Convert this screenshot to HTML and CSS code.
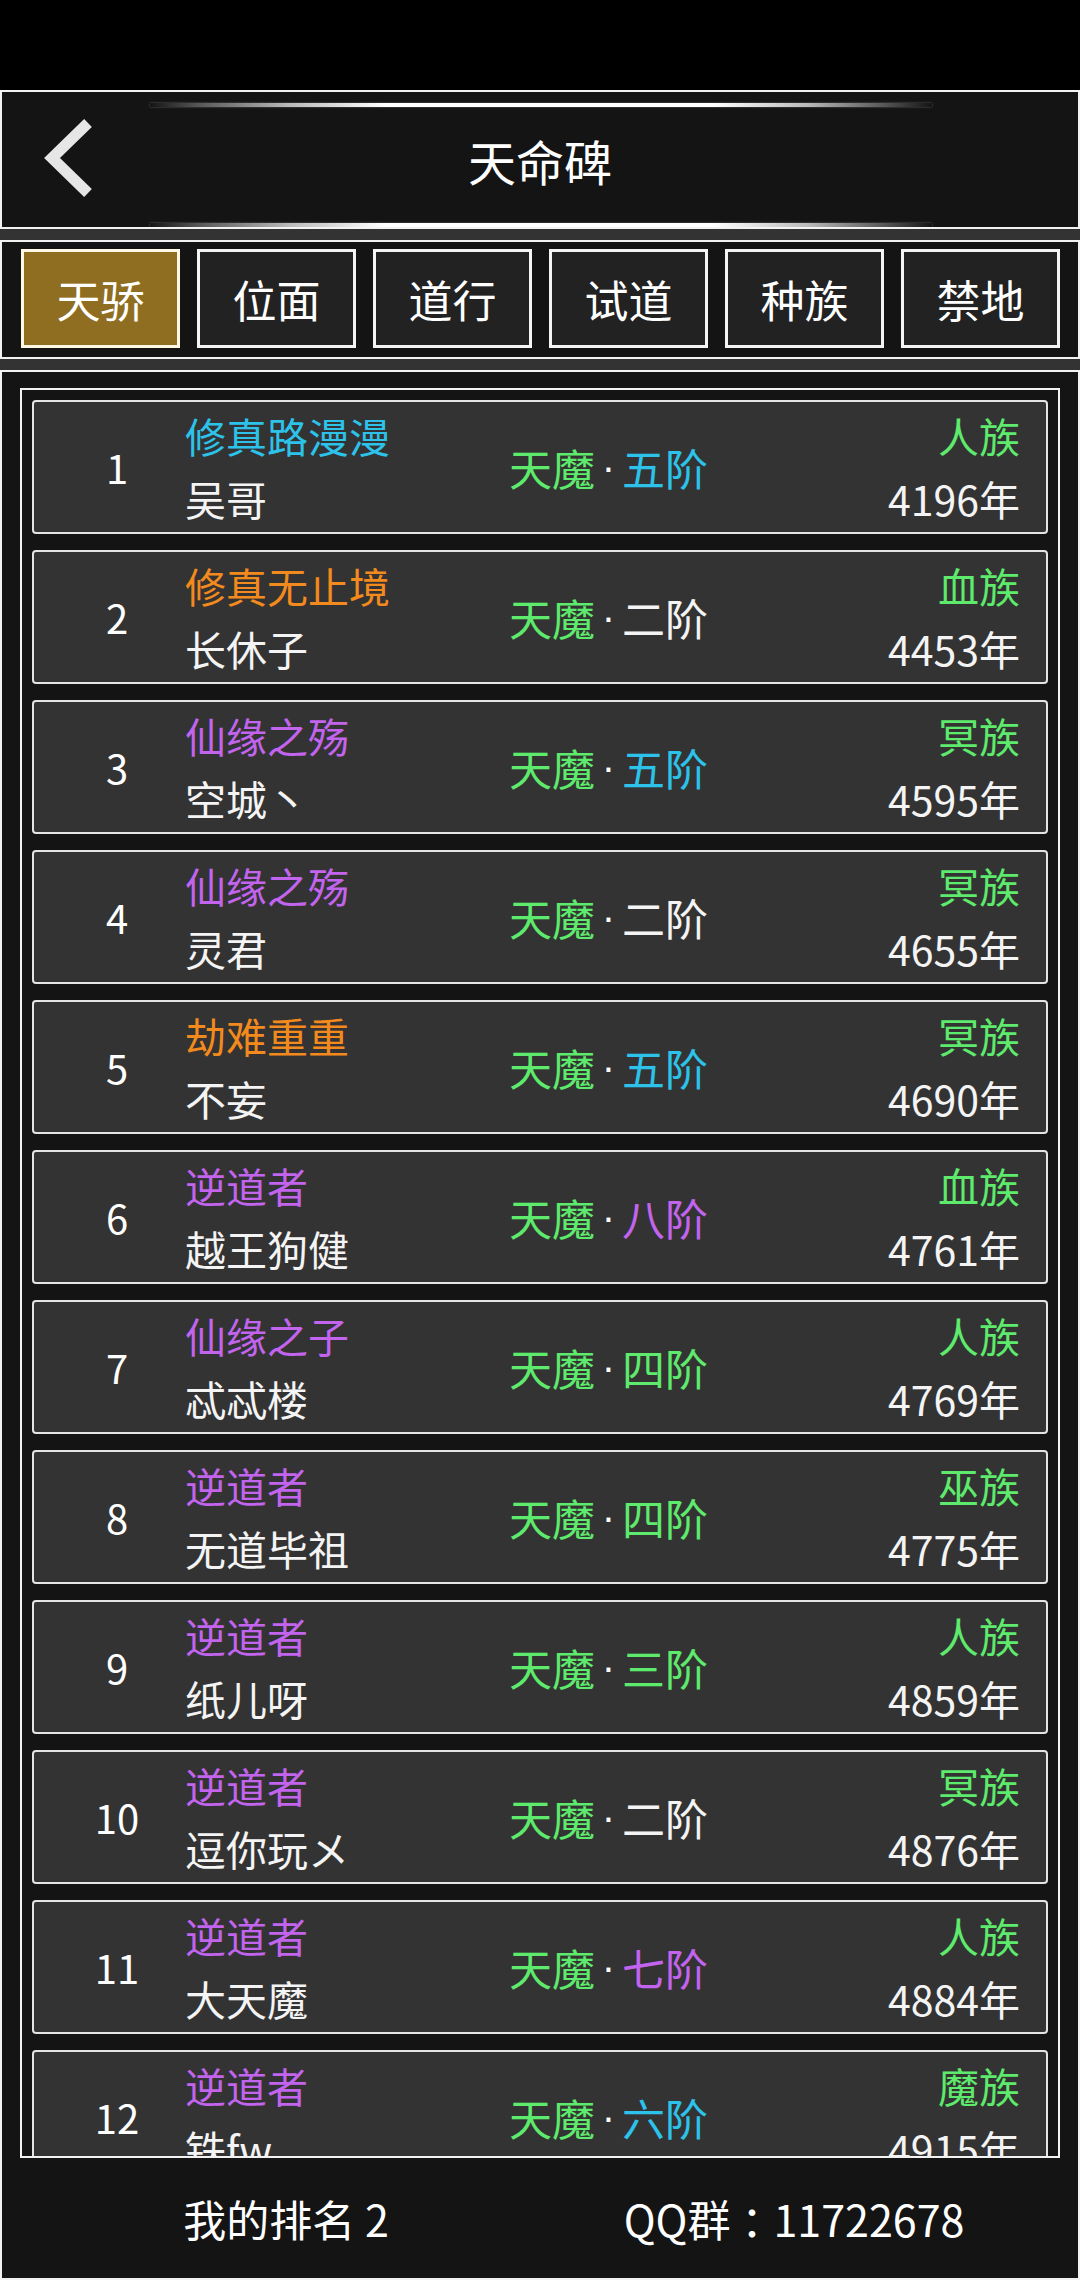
FILE: index.html
```html
<!DOCTYPE html>
<html lang="zh-CN">
<head>
<meta charset="utf-8">
<title>天命碑</title>
<link rel="stylesheet" href="styles.css">
</head>
<body>
<div class="status"></div>
<header class="header">
  <div class="gloss"></div>
  <div class="bar">
    <div class="back">
      <svg width="60" height="90" viewBox="0 0 60 90">
        <polyline points="46,8 10,43 46,78" fill="none" stroke="#e6e6e6" stroke-width="11" stroke-linejoin="miter" stroke-miterlimit="4"/>
      </svg>
    </div>
    <h1 class="title">天命碑</h1>
    <div></div>
  </div>
  <div class="gloss"></div>
</header>
<div class="strip"></div>
<nav class="tabs">
  <div class="tab active">天骄</div>
  <div class="tab">位面</div>
  <div class="tab">道行</div>
  <div class="tab">试道</div>
  <div class="tab">种族</div>
  <div class="tab">禁地</div>
</nav>
<div class="strip"></div>
<main class="panel">
  <div class="list">
    <div class="row"><div class="rank">1</div><div class="names"><span class="cyan">修真路漫漫</span><span>吴哥</span></div><div class="stage"><span class="green">天魔</span><span class="dot">·</span><span class="cyan">五阶</span></div><div class="meta"><span class="green">人族</span><span>4196年</span></div></div>
    <div class="row"><div class="rank">2</div><div class="names"><span class="orange">修真无止境</span><span>长休子</span></div><div class="stage"><span class="green">天魔</span><span class="dot">·</span><span>二阶</span></div><div class="meta"><span class="green">血族</span><span>4453年</span></div></div>
    <div class="row"><div class="rank">3</div><div class="names"><span class="purple">仙缘之殇</span><span>空城丶</span></div><div class="stage"><span class="green">天魔</span><span class="dot">·</span><span class="cyan">五阶</span></div><div class="meta"><span class="green">冥族</span><span>4595年</span></div></div>
    <div class="row"><div class="rank">4</div><div class="names"><span class="purple">仙缘之殇</span><span>灵君</span></div><div class="stage"><span class="green">天魔</span><span class="dot">·</span><span>二阶</span></div><div class="meta"><span class="green">冥族</span><span>4655年</span></div></div>
    <div class="row"><div class="rank">5</div><div class="names"><span class="orange">劫难重重</span><span>不妄</span></div><div class="stage"><span class="green">天魔</span><span class="dot">·</span><span class="cyan">五阶</span></div><div class="meta"><span class="green">冥族</span><span>4690年</span></div></div>
    <div class="row"><div class="rank">6</div><div class="names"><span class="purple">逆道者</span><span>越王狗健</span></div><div class="stage"><span class="green">天魔</span><span class="dot">·</span><span class="purple">八阶</span></div><div class="meta"><span class="green">血族</span><span>4761年</span></div></div>
    <div class="row"><div class="rank">7</div><div class="names"><span class="purple">仙缘之子</span><span>忒忒楼</span></div><div class="stage"><span class="green">天魔</span><span class="dot">·</span><span class="green">四阶</span></div><div class="meta"><span class="green">人族</span><span>4769年</span></div></div>
    <div class="row"><div class="rank">8</div><div class="names"><span class="purple">逆道者</span><span>无道毕祖</span></div><div class="stage"><span class="green">天魔</span><span class="dot">·</span><span class="green">四阶</span></div><div class="meta"><span class="green">巫族</span><span>4775年</span></div></div>
    <div class="row"><div class="rank">9</div><div class="names"><span class="purple">逆道者</span><span>纸儿呀</span></div><div class="stage"><span class="green">天魔</span><span class="dot">·</span><span class="green">三阶</span></div><div class="meta"><span class="green">人族</span><span>4859年</span></div></div>
    <div class="row"><div class="rank">10</div><div class="names"><span class="purple">逆道者</span><span>逗你玩メ</span></div><div class="stage"><span class="green">天魔</span><span class="dot">·</span><span>二阶</span></div><div class="meta"><span class="green">冥族</span><span>4876年</span></div></div>
    <div class="row"><div class="rank">11</div><div class="names"><span class="purple">逆道者</span><span>大天魔</span></div><div class="stage"><span class="green">天魔</span><span class="dot">·</span><span class="purple">七阶</span></div><div class="meta"><span class="green">人族</span><span>4884年</span></div></div>
    <div class="row"><div class="rank">12</div><div class="names"><span class="purple">逆道者</span><span>铁fw</span></div><div class="stage"><span class="green">天魔</span><span class="dot">·</span><span class="cyan">六阶</span></div><div class="meta"><span class="green">魔族</span><span>4915年</span></div></div>
  </div>
  <footer class="footer">
    <div>我的排名 2</div>
    <div>QQ群<span class="colon">：</span>11722678</div>
  </footer>
</main>
</body>
</html>
```
FILE: styles.css
```css
* { box-sizing: border-box; }
html, body {
  margin: 0;
  padding: 0;
  background: #000;
}
body {
  width: 1080px;
  height: 2280px;
  overflow: hidden;
  font-family: "Noto Sans CJK SC", "Noto Sans", sans-serif;
  color: #f4f4f4;
  display: flex;
  flex-direction: column;
}
.status { height: 90px; flex: none; }

.header {
  flex: none;
  height: 139px;
  background: #141414;
  border: 2px solid #f2f2f2;
  display: flex;
  flex-direction: column;
}
.gloss {
  margin: 11px 0 0 148px;
  width: 782px;
  height: 4px;
  background: linear-gradient(to right, rgba(255,255,255,0) 0%, #555 6%, #bbb 18%, #fff 30%, #fff 72%, #bbb 84%, #555 94%, rgba(255,255,255,0) 100%);
  box-shadow: 0 0 2px rgba(255,255,255,0.4);
}
.bar {
  height: 106px;
  display: grid;
  grid-template-columns: 200px 1fr 200px;
  align-items: center;
}
.back {
  padding-left: 40px;
  display: flex;
  align-items: center;
}
.back svg { display: block; }
.title {
  margin: 0;
  text-align: center;
  font-size: 48px;
  font-weight: 400;
  color: #fff;
}

.strip {
  flex: none;
  height: 11px;
  background: #333;
}

.tabs {
  flex: none;
  height: 119px;
  background: #141414;
  border: 2px solid #f2f2f2;
  padding: 7px 18px 0 19px;
  display: grid;
  grid-template-columns: repeat(6, 1fr);
  column-gap: 17px;
  align-content: start;
}
.tab {
  height: 99px;
  border: 3px solid #f4f4f4;
  background: #222;
  display: flex;
  align-items: center;
  justify-content: center;
  font-size: 44px;
  color: #fff;
}
.tab.active {
  background: #8f6d21;
  border-color: #fff8e4;
}

.panel {
  flex: 1;
  min-height: 0;
  background: #141414;
  border: 2px solid #f2f2f2;
  padding: 16px 18px 0 18px;
  display: flex;
  flex-direction: column;
}
.list {
  height: 1770px;
  flex: none;
  border: 2px solid #f2f2f2;
  padding: 10px 10px 0 10px;
  overflow: hidden;
  display: flex;
  flex-direction: column;
  gap: 16px;
}
.row {
  flex: none;
  height: 134px;
  background: #333;
  border: 2px solid #e4e4e4;
  border-radius: 4px;
  display: grid;
  grid-template-columns: 151px 324px 1fr auto;
  align-items: center;
  padding-right: 26px;
}
.rank {
  padding-left: 15px;
  text-align: center;
  font-size: 40px;
  color: #fff;
}
.names, .meta {
  display: flex;
  flex-direction: column;
  font-size: 41px;
  line-height: 63px;
}
.meta { align-items: flex-end; }
.stage {
  font-size: 43px;
  line-height: 60px;
  display: flex;
  align-items: center;
}
.dot {
  display: inline-block;
  width: 27px;
  text-align: center;
  font-family: "Liberation Sans", sans-serif;
  font-size: 40px;
  color: #fff;
}
.cyan { color: #2cc2ea; }
.orange { color: #f38a1d; }
.purple { color: #c264ee; }
.green { color: #5eea6c; }

.footer {
  flex: 1;
  display: grid;
  grid-template-columns: 1fr 1fr;
  align-items: center;
  padding: 0 12px;
  font-size: 43px;
  color: #fff;
  text-align: center;
}
.colon {
  display: inline-block;
  width: 43px;
  text-align: center;
  font-feature-settings: "palt";
}
```
